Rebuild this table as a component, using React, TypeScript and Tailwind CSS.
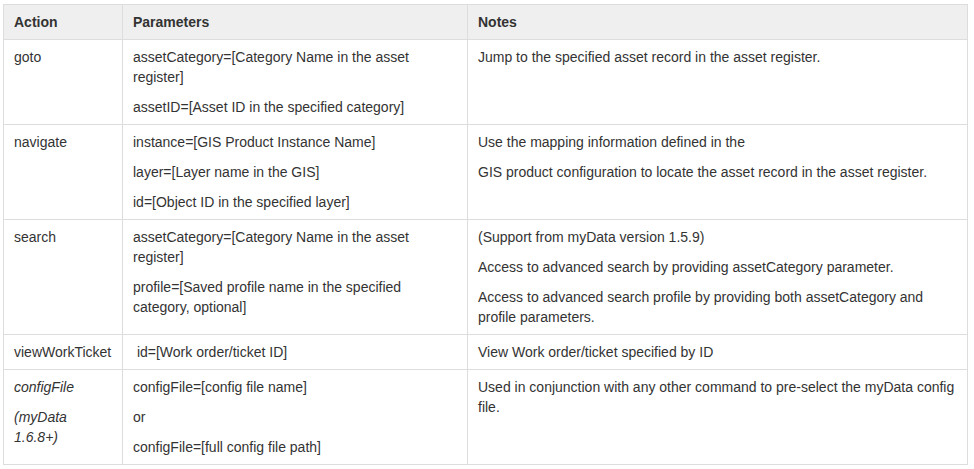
import React from 'react';

type Row = {
  action: React.ReactNode[];
  params: React.ReactNode[];
  notes: React.ReactNode[];
  italicAction?: boolean;
};

const ROWS: Row[] = [
  {
    action: ['goto'],
    params: ['assetCategory=[Category Name in the asset register]', 'assetID=[Asset ID in the specified category]'],
    notes: ['Jump to the specified asset record in the asset register.'],
  },
  {
    action: ['navigate'],
    params: ['instance=[GIS Product Instance Name]', 'layer=[Layer name in the GIS]', 'id=[Object ID in the specified layer]'],
    notes: ['Use the mapping information defined in the', 'GIS product configuration to locate the asset record in the asset register.'],
  },
  {
    action: ['search'],
    params: ['assetCategory=[Category Name in the asset register]', 'profile=[Saved profile name in the specified category, optional]'],
    notes: [
      '(Support from myData version 1.5.9)',
      'Access to advanced search by providing assetCategory parameter.',
      'Access to advanced search profile by providing both assetCategory and profile parameters.',
    ],
  },
  {
    action: ['viewWorkTicket'],
    params: ['\u00a0id=[Work order/ticket ID]'],
    notes: ['View Work order/ticket specified by ID'],
  },
  {
    action: ['configFile', '(myData 1.6.8+)'],
    params: ['configFile=[config file name]', 'or', 'configFile=[full config file path]'],
    notes: ['Used in conjunction with any other command to pre-select the myData config file.'],
    italicAction: true,
  },
];

const Cell: React.FC<{ items: React.ReactNode[]; italic?: boolean }> = ({ items, italic }) => (
  <td className="border border-[#dddddd] px-[10px] pt-[7px] pb-[7px] align-top">
    <div className={`flex flex-col gap-[10px] ${italic ? 'italic' : ''}`}>
      {items.map((t, i) => (
        <p key={i}>{t}</p>
      ))}
    </div>
  </td>
);

export default function App() {
  return (
    <div className="bg-white pt-[4px] pl-[3px] min-h-[469px]" style={{ fontFamily: '"Liberation Sans", Arial, sans-serif' }}>
      <table className="table-fixed border-collapse w-[964px] text-[14px] leading-[20px] text-[#333333]">
        <colgroup>
          <col className="w-[119px]" />
          <col className="w-[345px]" />
          <col className="w-[500px]" />
        </colgroup>
        <thead>
          <tr className="bg-[#efefef]">
            <th className="border border-[#dddddd] px-[10px] py-[7px] text-left font-bold">Action</th>
            <th className="border border-[#dddddd] px-[10px] py-[7px] text-left font-bold">Parameters</th>
            <th className="border border-[#dddddd] px-[10px] py-[7px] text-left font-bold">Notes</th>
          </tr>
        </thead>
        <tbody>
          {ROWS.map((row, i) => (
            <tr key={i}>
              <Cell items={row.action} italic={row.italicAction} />
              <Cell items={row.params} />
              <Cell items={row.notes} />
            </tr>
          ))}
        </tbody>
      </table>
    </div>
  );
}
